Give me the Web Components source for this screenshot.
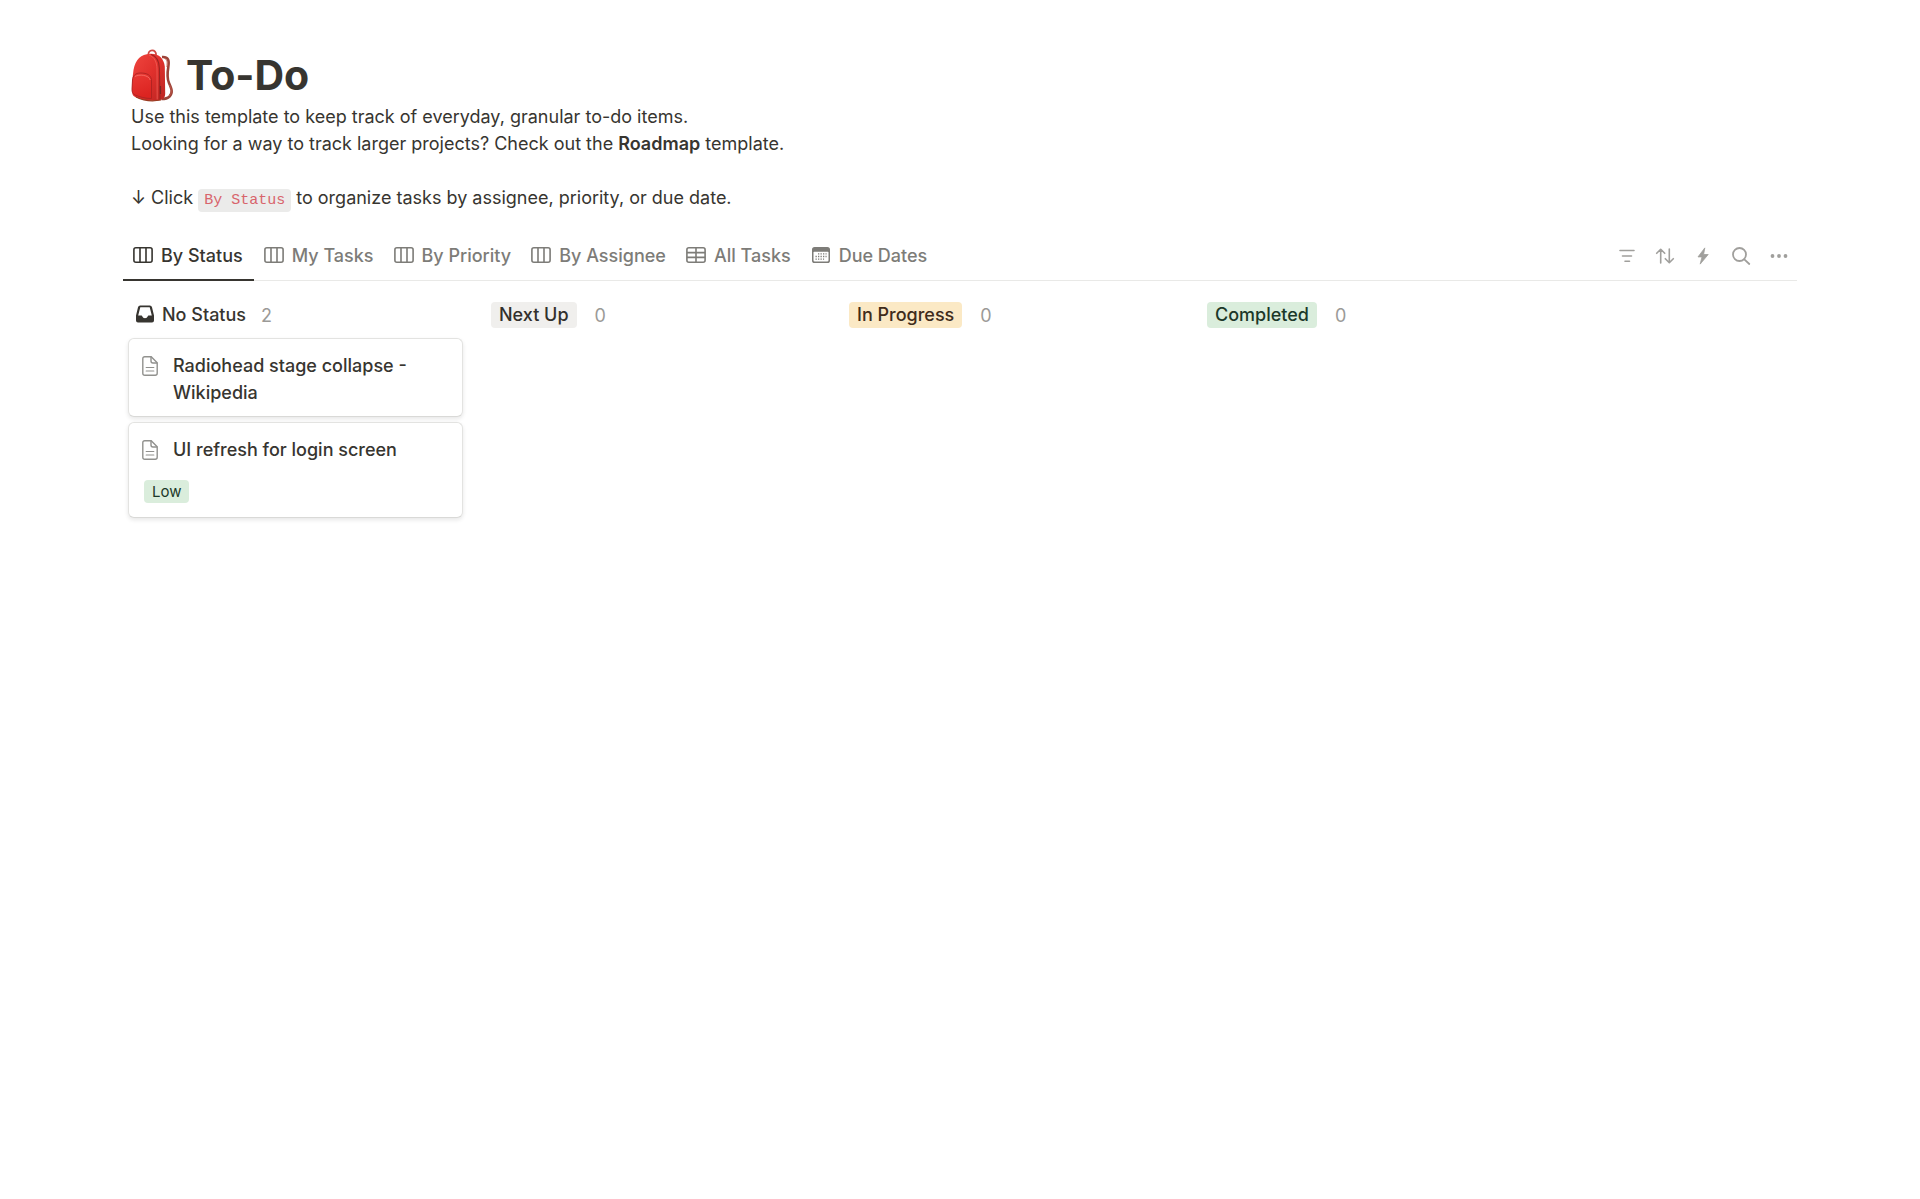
<!DOCTYPE html>
<html lang="en">
<head>
<meta charset="utf-8">
<title>To-Do</title>
<style>
body { margin: 0; background: #fff; color: #373530; font: 18px/27px Inter, "Liberation Sans", sans-serif; }
</style>
</head>
<body>
<todo-page></todo-page>
<script>
const ICONS = {
  board: `<svg width="20" height="20" viewBox="0 0 20 20" fill="none" stroke="currentColor" stroke-width="1.6"><rect x=".9" y="2.8" width="18.2" height="14.4" rx="2"/><path d="M7 2.8v14.4M13 2.8v14.4"/></svg>`,
  table: `<svg width="20" height="20" viewBox="0 0 20 20" fill="none" stroke="currentColor" stroke-width="1.6"><rect x=".9" y="2.8" width="18.2" height="14.4" rx="2"/><path d="M.9 7.6h18.2M.9 12.4h18.2M10 2.8v14.4"/></svg>`,
  calendar: `<svg width="20" height="20" viewBox="0 0 20 20"><path fill="currentColor" fill-rule="evenodd" d="M3.6 2h12.8A2.6 2.6 0 0 1 19 4.6v10.8A2.6 2.6 0 0 1 16.4 18H3.6A2.6 2.6 0 0 1 1 15.4V4.6A2.6 2.6 0 0 1 3.6 2zM2.5 7.3v7.9q0 1.3 1.3 1.3h12.4q1.3 0 1.3-1.3V7.3q0-.6-.7-.6H3.2q-.7 0-.7.6z"/><path stroke="currentColor" stroke-width="1.3" stroke-dasharray="1.3 1.2" d="M7 8.9h8.600M4.500 11.500h11.100M4.500 14.100h8.600"/></svg>`,
  filter: `<svg width="18" height="18" viewBox="0 0 18 18" fill="none" stroke="currentColor" stroke-width="1.6" stroke-linecap="round"><path d="M2 3.5h14M4.5 9h9M7 14.2h4.500"/></svg>`,
  sort: `<svg width="20" height="18" viewBox="0 0 20 18" fill="none" stroke="currentColor" stroke-width="1.6" stroke-linecap="round" stroke-linejoin="round"><path d="M5.7 16V2.5M1.7 6.3l4-4 4 4M14.3 2v13.500M10.300 11.700l4 4 4-4"/></svg>`,
  bolt: `<svg width="18" height="18" viewBox="0 0 18 18"><path fill="currentColor" stroke="currentColor" stroke-width=".8" stroke-linejoin="round" d="M10.8.9 4 9.9h4L6.2 17.100 14.200 7.500H9.600z"/></svg>`,
  search: `<svg width="20" height="20" viewBox="0 0 20 20" fill="none" stroke="currentColor" stroke-width="1.8" stroke-linecap="round"><circle cx="8.5" cy="8.5" r="6.5"/><path d="m13.3 13.3 5 4.700"/></svg>`,
  more: `<svg width="18" height="18" viewBox="0 0 18 18" fill="currentColor"><circle cx="2.5" cy="9" r="1.9"/><circle cx="9" cy="9" r="1.9"/><circle cx="15.5" cy="9" r="1.9"/></svg>`,
  inbox: `<svg width="18" height="18" viewBox="0 0 18 18"><path fill="currentColor" fill-rule="evenodd" d="M4.2.5h9.600q1.800 0 2.200 1.700L18 10.500v5q0 2-2 2H2q-2 0-2-2v-5L2 2.200Q2.400.5 4.200.5zM4.300 2.200 2.200 10.500h3.300q.5 0 .7.700.7 2.100 2.800 2.100t2.800-2.100q.2-.7.700-.7h3.300L13.700 2.200z"/></svg>`,
  page: `<svg width="16" height="20" viewBox="0 0 16 20" fill="none" stroke="#91918e" stroke-width="1.4"><path d="M2.8.8h6.400L15.200 6.800V17.200q0 2-2 2H2.800q-2 0-2-2V2.800q0-2 2-2z"/><path d="M9 .8v4.200q0 2 2 2h4.200"/><path d="M4.200 11.500h7.600M4.200 15h7.600" stroke-width="1.2" stroke-linecap="round"/></svg>`,
  backpack: `<svg width="44" height="54" viewBox="0 0 44 54">
    <defs><linearGradient id="body" x2="1" y2="1"><stop stop-color="#f0463f"/><stop offset=".5" stop-color="#e0302c"/><stop offset="1" stop-color="#bb2522"/></linearGradient>
    <linearGradient id="pocket" x2=".3" y2="1"><stop stop-color="#ea3a35"/><stop offset="1" stop-color="#dc2421"/></linearGradient></defs>
    <path d="M31 9c6-.5 7.500 3 6.300 10-1 6-1.500 11 .7 16 2.500 5.500 4.300 9.500.5 13.500-2 2-5 2.500-8 2.500" fill="none" stroke="#9c4338" stroke-width="2.600"/>
    <path d="M33.500 10.500c2.800 1 2.800 4 2.300 8.500M38.500 37c2.200 4 3 8-.5 11" fill="none" stroke="#c5594c" stroke-width=".8"/>
    <path d="M17.500 7.500c-1.500-6.500 8.500-7 7.500 0" fill="none" stroke="#cf4a44" stroke-width="1.800"/>
    <path d="M2.500 22C4.500 11 10 6.500 19 5.800c9-.5 14 5 14.800 12.700l.4 27.500c0 3.500-2 5.500-6 6.300-8 1.400-18-.3-24-3.300-2.600-1.300-3-3-3-6C1 36 1.500 29 2.500 22z" fill="url(#body)"/>
    <path d="M20 6.500c5.500 1.500 8.200 7 8.400 14L29 51.500" fill="none" stroke="#9d2422" stroke-width="1.100"/>
    <path d="M18 7c5.500 2 7.800 7 8 14l.2 30.500" fill="none" stroke="#f5655c" stroke-width=".7"/>
    <path d="M1.500 32c.4-4.500 3-7 8-7 6.500 0 11 2 11 8v17.500c-6 0-12-1.500-16.500-3.500-2.600-1.400-3-3-3-6z" fill="url(#pocket)" stroke="#ad2321" stroke-width=".9"/>
    <path d="M4 28.500c4-2.500 14-1.600 15.200 3.500" fill="none" stroke="#f8736b" stroke-width=".8"/>
    <path d="M29.500 38v8" stroke="#7c2522" stroke-width="1.200"/>
    <path d="M5 49c7 3.500 17 4.500 25 3" fill="none" stroke="#9a3a20" stroke-width="1.200"/></svg>`
};

const RESET = `*{box-sizing:border-box} button{font:inherit;color:inherit;background:none;border:0;margin:0;padding:0;cursor:pointer} svg{display:block;flex:none}`;

function define(name, render) {
  customElements.define(name, class extends HTMLElement {
    connectedCallback() {
      if (this.shadowRoot) return;
      const template = document.createElement("template");
      template.innerHTML = render(this);
      this.attachShadow({ mode: "open" }).append(template.content.cloneNode(true));
    }
  });
}

define("app-icon", el => `<style>:host{display:flex;flex:none} svg{display:block}</style>${ICONS[el.getAttribute("name")]}`);

define("page-header", () => `<style>${RESET}
  :host{display:block;padding:0 8px}
  h1{display:flex;align-items:center;gap:11px;margin:0;font-size:41px;line-height:52px;font-weight:700}
  </style><h1><app-icon name="backpack"></app-icon><slot></slot></h1>`);

define("page-intro", () => `<style>${RESET}
  :host{display:block;padding:0 8px}
  p{margin:0;min-height:27px} strong{font-weight:600}
  p + p{margin-top:27px}
  code{font:15px/20px "Liberation Mono",monospace;color:#d8646c;background:#ebebea;border-radius:4px;padding:3px 6px}
  </style>
  <p>Use this template to keep track of everyday, granular to-do items.<br>Looking for a way to track larger projects? Check out the <strong>Roadmap</strong> template.</p>
  <p>↓ Click <code>By Status</code> to organize tasks by assignee, priority, or due date.</p>`);

define("view-tab", el => `<style>${RESET}
  :host{display:block}
  button{display:flex;align-items:center;gap:8px;height:50px;padding:0 10px;font-weight:500;color:#7d7c78;border-bottom:2px solid transparent;white-space:nowrap}
  button[aria-selected=true]{padding-right:11px;color:#373530;border-color:#373530}
  </style><button role="tab" aria-selected="${el.hasAttribute("active")}"><app-icon name="${el.getAttribute("icon")}"></app-icon><slot></slot></button>`);

define("tool-button", el => `<style>${RESET}
  :host{display:block}
  button{display:flex;align-items:center;justify-content:center;width:38px;height:38px;color:#a09f9c}
  </style><button aria-label="${el.getAttribute("label")}"><app-icon name="${el.getAttribute("icon")}"></app-icon></button>`);

define("view-bar", () => `<style>${RESET}
  :host{display:flex;justify-content:space-between;align-items:center;height:50px;box-shadow:inset 0 -1px #e9e9e7}
  div{display:flex}
  .tools{margin-right:-1px}
  </style><div role="tablist"><slot></slot></div><div class="tools"><slot name="tools"></slot></div>`);

define("status-tag", () => `<style>
  :host{display:block;width:fit-content;padding:0 8px;border-radius:4px;font-size:18px;line-height:26px;font-weight:500;background:#f0efed;color:#32302c;white-space:nowrap}
  :host([color=yellow]){background:#fbe9c5;color:#402c1b}
  :host([color=green]){background:#daeddc;color:#1c3829}
  :host([small]){font-size:15px;line-height:23px;font-weight:400}
  </style><slot></slot>`);

define("board-column", el => `<style>${RESET}
  :host{display:block;flex:0 0 335px}
  header{display:flex;align-items:center;gap:18px;height:26px;padding:0 5px;margin-bottom:10px}
  span{color:#9b9a97}
  .cards{display:flex;flex-direction:column;gap:5px}
  </style><header><slot name="title"></slot><span>${el.getAttribute("count")}</span></header><div class="cards"><slot></slot></div>`);

define("plain-status", () => `<style>
  :host{display:flex;align-items:center;gap:8px;padding:0 0 2px 3px;margin-right:-3px;font-weight:500;white-space:nowrap}
  </style><app-icon name="inbox"></app-icon><slot></slot>`);

define("task-card", () => `<style>${RESET}
  :host{display:block;padding:13px 13px 10px;border:1px solid #e3e3e1;border-bottom-color:#d9d9d7;border-radius:6px;background:#fff;box-shadow:0 2px 4px #0f0f0f1a}
  .title{display:flex;gap:15px;font-weight:500}
  app-icon{padding-top:4px}
  ::slotted(status-tag){margin:17px 0 4px 2px}
  </style><div class="title"><app-icon name="page"></app-icon><slot></slot></div><slot name="tag"></slot>`);

define("todo-page", () => `<style>
  :host{display:block;padding:48px 123px}
  page-intro{margin-top:1px}
  view-bar{margin-top:20px}
  main{display:flex;gap:23px;padding:21px 5px 0}
  </style>
  <page-header>To-Do</page-header>
  <page-intro></page-intro>
  <view-bar>
    <view-tab icon="board" active>By Status</view-tab>
    <view-tab icon="board">My Tasks</view-tab>
    <view-tab icon="board">By Priority</view-tab>
    <view-tab icon="board">By Assignee</view-tab>
    <view-tab icon="table">All Tasks</view-tab>
    <view-tab icon="calendar">Due Dates</view-tab>
    <tool-button slot="tools" icon="filter" label="Filter"></tool-button>
    <tool-button slot="tools" icon="sort" label="Sort"></tool-button>
    <tool-button slot="tools" icon="bolt" label="Automations"></tool-button>
    <tool-button slot="tools" icon="search" label="Search"></tool-button>
    <tool-button slot="tools" icon="more" label="More"></tool-button>
  </view-bar>
  <main>
    <board-column count="2">
      <plain-status slot="title">No Status</plain-status>
      <task-card>Radiohead stage collapse - Wikipedia</task-card>
      <task-card>UI refresh for login screen<status-tag slot="tag" color="green" small>Low</status-tag></task-card>
    </board-column>
    <board-column count="0"><status-tag slot="title">Next Up</status-tag></board-column>
    <board-column count="0"><status-tag slot="title" color="yellow">In Progress</status-tag></board-column>
    <board-column count="0"><status-tag slot="title" color="green">Completed</status-tag></board-column>
  </main>`);
</script>
</body>
</html>
